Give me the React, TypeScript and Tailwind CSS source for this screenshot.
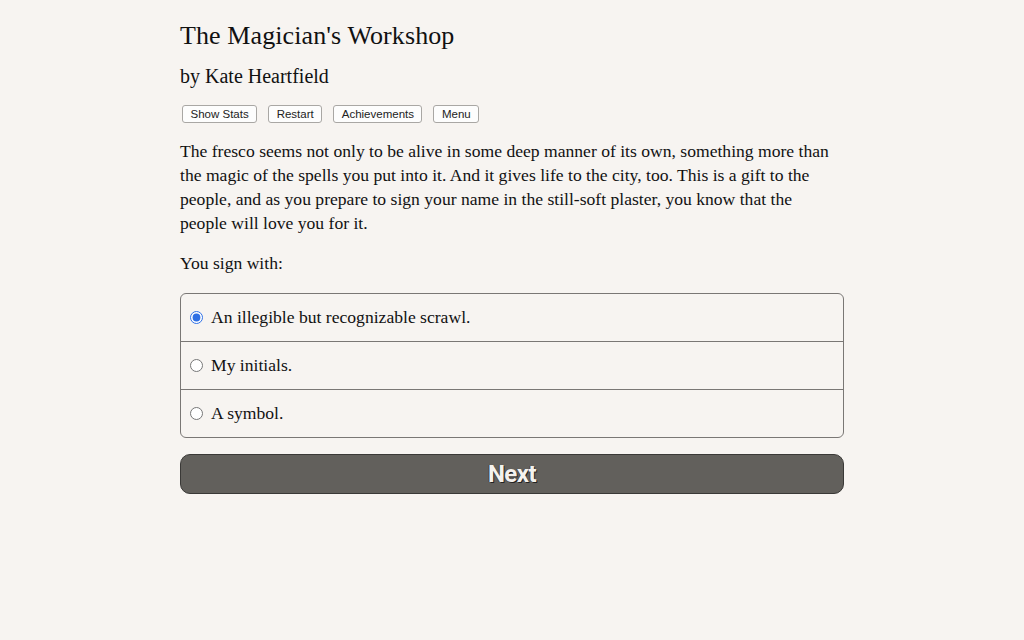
import { useState } from "react";

const choices = [
  "An illegible but recognizable scrawl.",
  "My initials.",
  "A symbol.",
];

const topButtons = ["Show Stats", "Restart", "Achievements", "Menu"];

export default function App() {
  const [picked, setPicked] = useState(0);

  return (
    <div className="min-h-[640px] w-full bg-[#f7f4f1] text-[#111] font-['Liberation_Serif',serif]">
      <div className="mx-auto w-[664px] pt-[18px]">
        <h1 className="text-[26px] leading-[36px] tracking-[0.1px]">The Magician's Workshop</h1>
        <h2 className="mt-[8px] text-[20px] leading-[28px]">by Kate Heartfield</h2>

        <div className="mt-[15px] flex gap-[11px] px-[2px] font-['Liberation_Sans',sans-serif]">
          {topButtons.map((label) => (
            <button
              key={label}
              className="h-[18px] rounded-[3px] border border-[#a9a7a4] bg-[#fdfdfd] px-[7.5px] text-[11.5px] leading-[16px] text-[#222]"
            >
              {label}
            </button>
          ))}
        </div>

        <p className="mt-[16px] text-[17.6px] leading-[24px]">
          The fresco seems not only to be alive in some deep manner of its own, something more than
          <br />
          the magic of the spells you put into it. And it gives life to the city, too. This is a gift to the
          <br />
          people, and as you prepare to sign your name in the still-soft plaster, you know that the
          <br />
          people will love you for it.
        </p>

        <p className="mt-[16px] text-[17.6px] leading-[24px]">You sign with:</p>

        <div className="mt-[18px] overflow-hidden rounded-[6px] border border-[#7a7775]">
          {choices.map((c, i) => (
            <label
              key={c}
              className={
                "flex cursor-pointer items-center gap-[8px] px-[9px] text-[17.6px]" +
                (i > 0 ? " h-[48px] border-t border-[#7a7775]" : " h-[47px]")
              }
            >
              <input
                type="radio"
                name="choice"
                checked={picked === i}
                onChange={() => setPicked(i)}
                className="m-0 h-[13px] w-[13px] accent-[#2f6fe4]"
              />
              <span>{c}</span>
            </label>
          ))}
        </div>

        <button className="mt-[16px] h-[40px] w-full rounded-[10px] border border-[#3a3937] bg-[#62605c] font-['Roboto',sans-serif] text-[24px] font-bold tracking-[-0.5px] text-[#f4f2ee] [text-shadow:1px_1px_0_#222,-1px_0_0_#444]">
          Next
        </button>
      </div>
    </div>
  );
}
